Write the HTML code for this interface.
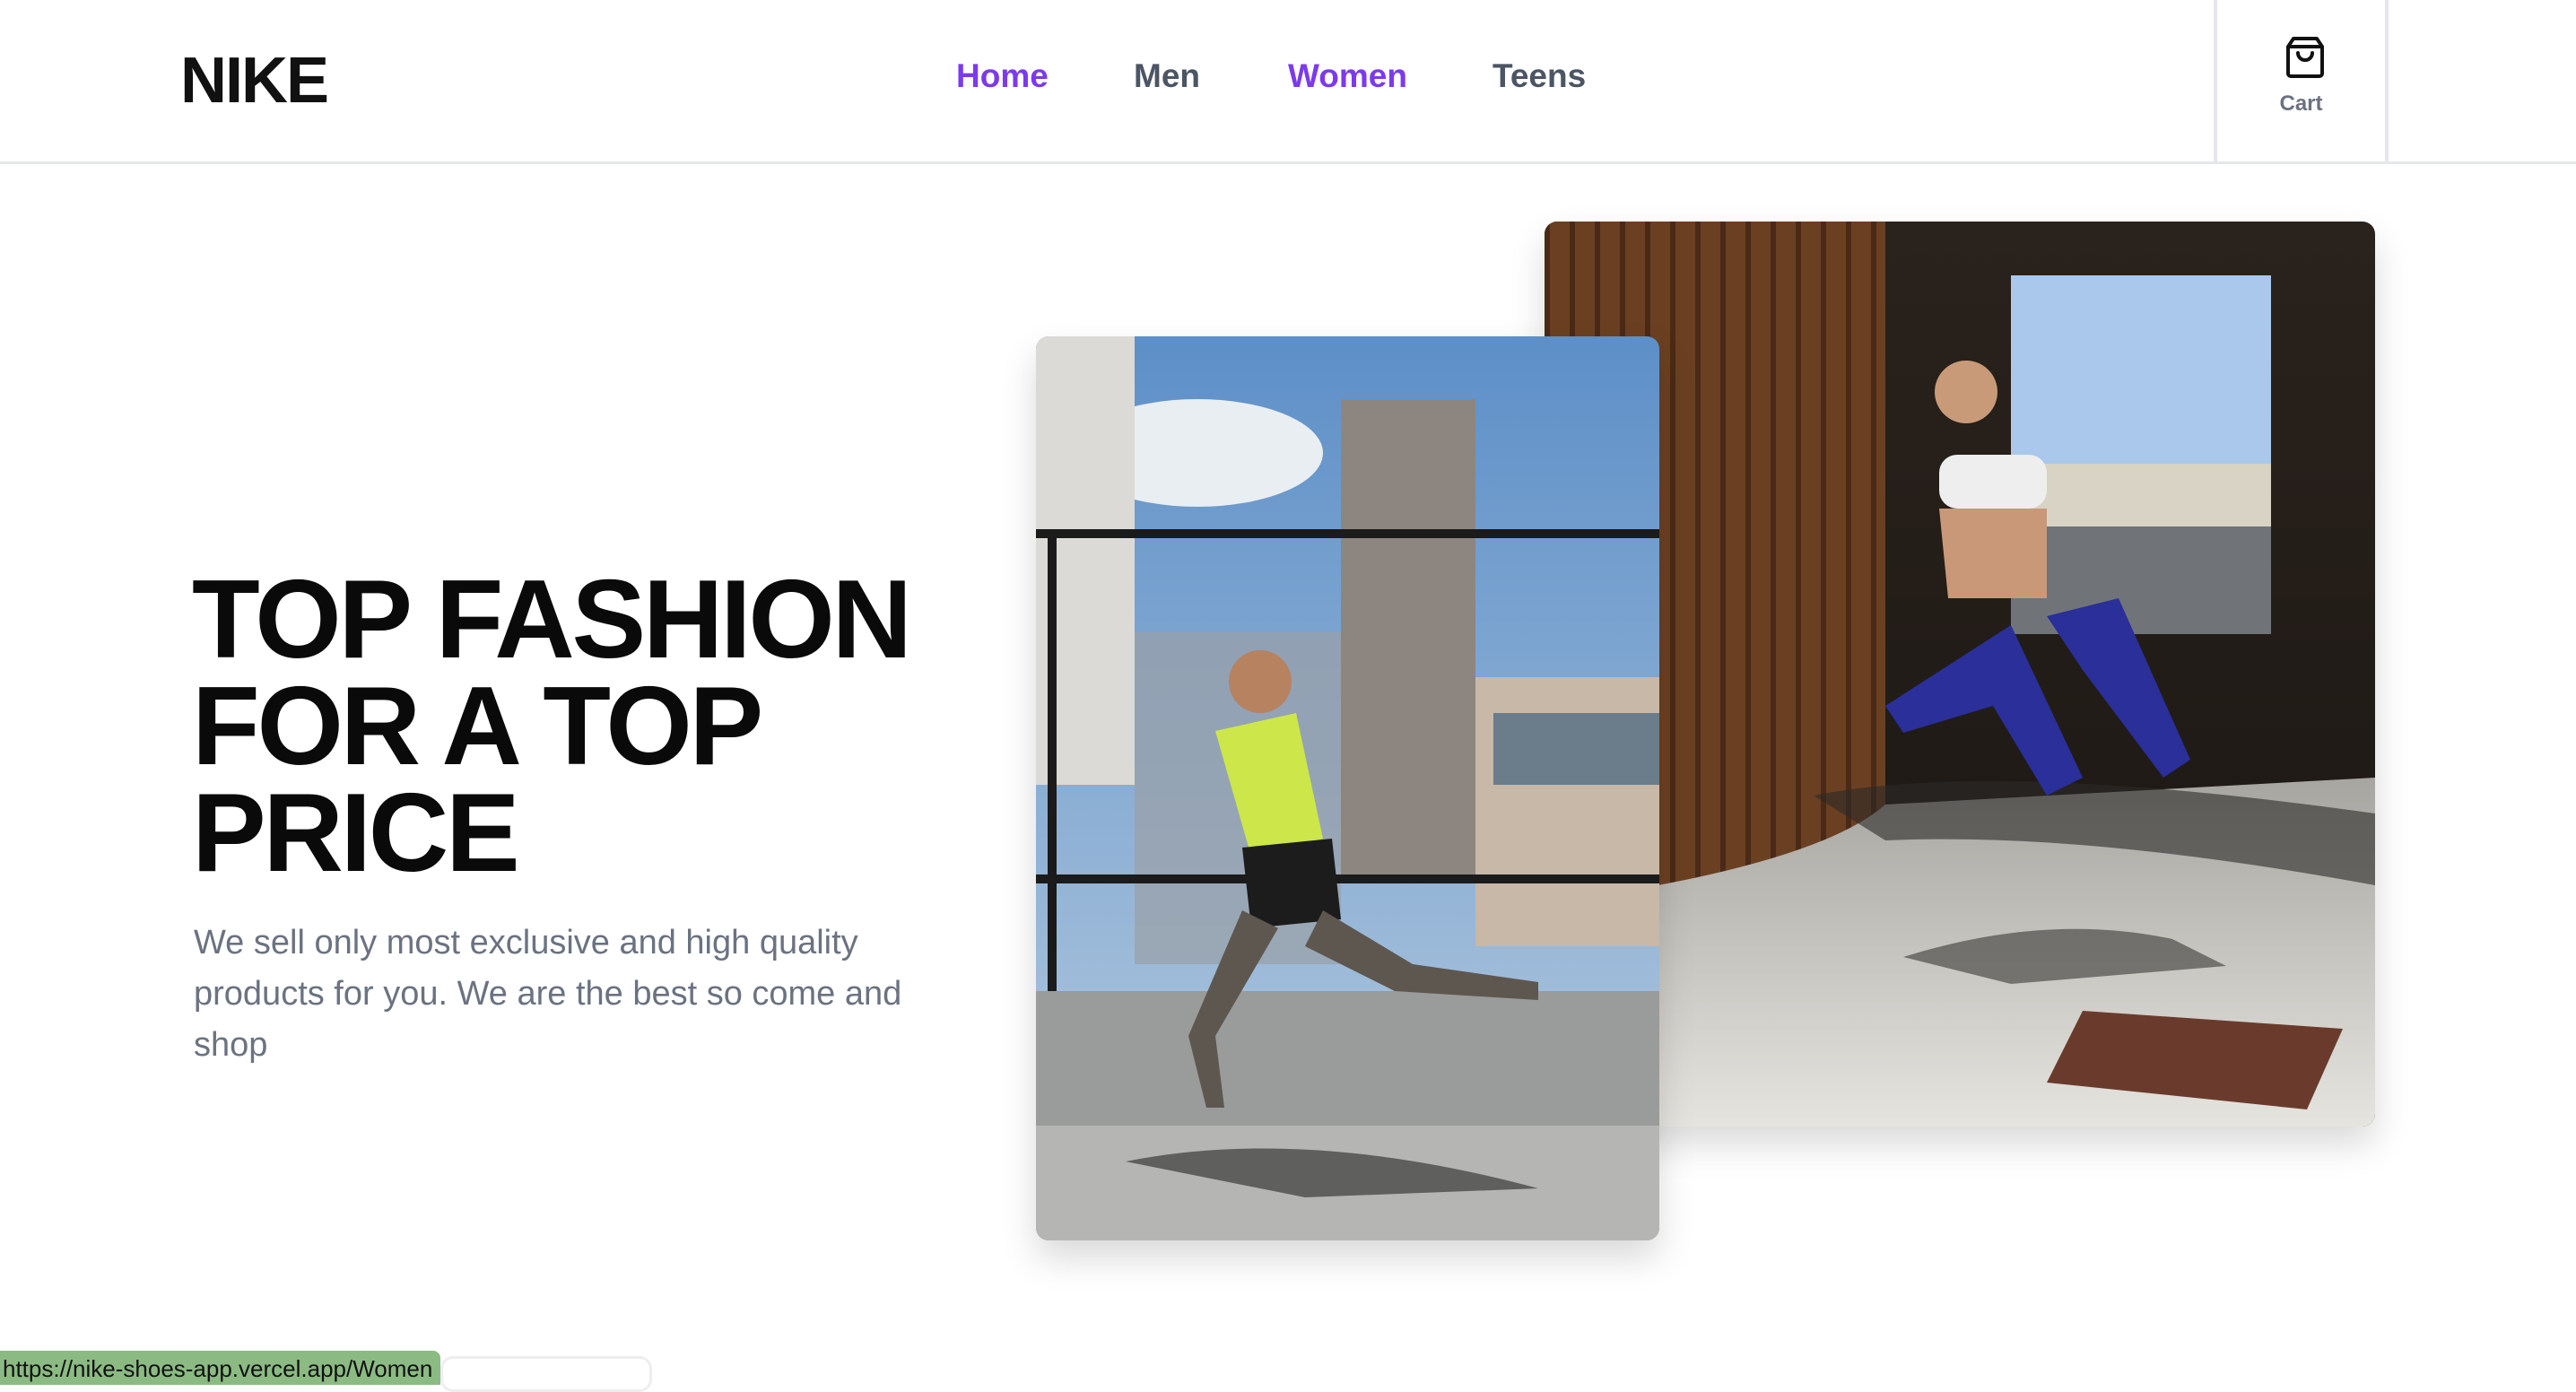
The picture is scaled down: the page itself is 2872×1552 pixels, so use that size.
<!DOCTYPE html>
<html><head><meta charset="utf-8"><style>
*{margin:0;padding:0;box-sizing:border-box}
body{width:2872px;height:1544px;background:#fff;font-family:"Liberation Sans",sans-serif;position:relative;overflow:hidden}
.hdr{position:absolute;left:0;top:0;width:2872px;height:183px;border-bottom:3px solid #e5e7eb}
.logo{position:absolute;left:201px;top:49px;font-size:72px;font-weight:bold;color:#111;letter-spacing:-2px}
.nav{position:absolute;top:64px;font-size:37px;font-weight:bold;color:#4b5563}
.p{color:#7c3aed}
.cart{position:absolute;left:2468px;top:0;width:195px;height:182px;border-left:4px solid #e5e7eb;border-right:4px solid #e5e7eb;text-align:center}
.cart span{position:absolute;left:0;right:0;top:102px;font-size:24px;font-weight:bold;color:#6b7280}
h1{position:absolute;left:214px;top:632px;font-size:124px;line-height:119px;font-weight:bold;color:#0a0a0a;letter-spacing:-3.3px;width:900px}
.desc{position:absolute;left:216px;top:1023px;width:840px;font-size:38px;line-height:57px;color:#6b7280}
.img{position:absolute;border-radius:14px;overflow:hidden;box-shadow:0 20px 40px rgba(0,0,0,.15)}
.status{position:absolute;left:0;top:1506px;width:491px;height:38px;background:#8bbb83;border-top-right-radius:8px;font-size:26px;color:#111;padding:5px 0 0 3px}
.card{position:absolute;left:491px;top:1512px;width:236px;height:40px;border:3px solid #eee;border-radius:14px}
</style></head><body>
<div class="hdr">
<div class="logo">NIKE</div>
<div class="nav p" style="left:1066px">Home</div>
<div class="nav" style="left:1264px">Men</div>
<div class="nav p" style="left:1436px">Women</div>
<div class="nav" style="left:1664px">Teens</div>
<div class="cart">
<svg style="position:absolute;left:75px;top:40px" width="46" height="48" viewBox="0 0 46 48"><path d="M10 3H36L42 12V42A3 3 0 0 1 39 45H7A3 3 0 0 1 4 42V12Z M4 12H42 M15 19A8 8 0 0 0 31 19" fill="none" stroke="#111" stroke-width="4" stroke-linejoin="round" stroke-linecap="round"/></svg>
<span>Cart</span></div>
</div>
<h1>TOP FASHION FOR A TOP PRICE</h1>
<div class="desc">We sell only most exclusive and high quality products for you. We are the best so come and shop</div>

<div class="img" style="left:1722px;top:247px;width:926px;height:1009px">
<svg width="926" height="1009" viewBox="0 0 926 1009">
<defs><linearGradient id="g1" x1="0" y1="0" x2="0" y2="1"><stop offset="0" stop-color="#2a221c"/><stop offset="1" stop-color="#1a1613"/></linearGradient>
<linearGradient id="gr" x1="0" y1="0" x2="0" y2="1"><stop offset="0" stop-color="#a7a5a0"/><stop offset="1" stop-color="#e6e4df"/></linearGradient>
<pattern id="st" width="28" height="10" patternUnits="userSpaceOnUse"><rect width="28" height="10" fill="#6b4022"/><rect width="6" height="10" fill="#4a2a16"/></pattern></defs>
<rect width="926" height="1009" fill="url(#g1)"/>
<rect width="380" height="800" fill="url(#st)"/>
<rect x="520" y="60" width="290" height="300" fill="#a9c8ec"/>
<rect x="520" y="270" width="290" height="130" fill="#d8d3c4"/>
<rect x="520" y="340" width="290" height="120" fill="#707478"/>
<path d="M0 760 Q300 720 380 650 L926 620 V1009 H0Z" fill="url(#gr)"/>
<path d="M300 640 Q500 600 926 660 V740 Q600 680 380 690Z" fill="#2c2a28" opacity=".6"/>
<path d="M600 880 L890 900 L850 990 L560 960Z" fill="#6a3b2c"/>
<path d="M380 540 L520 450 L600 620 L560 640 L500 540 L400 570Z" fill="#2a2f9a"/>
<path d="M560 440 L640 420 L720 600 L690 620 L600 500Z" fill="#2a2f9a"/>
<rect x="440" y="260" width="120" height="60" rx="20" fill="#eee"/>
<circle cx="470" cy="190" r="35" fill="#c89a78"/>
<path d="M440 320 L560 320 L560 420 L450 420Z" fill="#c99879"/>
<path d="M400 820 Q560 770 700 800 L760 830 L520 850Z" fill="#3a3836" opacity=".6"/>
</svg></div>

<div class="img" style="left:1155px;top:375px;width:695px;height:1008px">
<svg width="695" height="1008" viewBox="0 0 695 1008">
<defs><linearGradient id="s" x1="0" y1="0" x2="0" y2="1"><stop offset="0" stop-color="#5d8fc8"/><stop offset="1" stop-color="#b8cde0"/></linearGradient></defs>
<rect width="695" height="1008" fill="url(#s)"/>
<ellipse cx="180" cy="130" rx="140" ry="60" fill="#e9eef3"/>
<rect x="0" y="0" width="110" height="500" fill="#dcdad6"/>
<rect x="340" y="70" width="150" height="530" fill="#8d8680"/>
<rect x="490" y="380" width="205" height="300" fill="#c7b8a8"/>
<rect x="510" y="420" width="185" height="80" fill="#6b7c8a"/>
<rect x="110" y="330" width="230" height="370" fill="#9aa0a6" opacity=".7"/>
<g stroke="#1b1b1b" stroke-width="10"><line x1="0" y1="220" x2="695" y2="220"/><line x1="0" y1="605" x2="695" y2="605"/><line x1="18" y1="215" x2="18" y2="730"/></g>
<rect x="0" y="730" width="695" height="278" fill="#9a9b9b"/>
<rect x="0" y="880" width="695" height="128" fill="#b5b5b3"/>
<path d="M200 440 L290 420 L320 560 L240 580Z" fill="#cde64a"/>
<path d="M230 570 L330 560 L340 650 L240 660Z" fill="#1c1c1c"/>
<path d="M230 640 L170 780 L190 860 L210 860 L200 780 L270 660Z M320 640 L420 700 L560 720 L560 740 L400 730 L300 680Z" fill="#5e5750"/>
<circle cx="250" cy="385" r="35" fill="#b78260"/>
<path d="M100 920 Q300 880 560 950 L300 960Z" fill="#3a3a3a" opacity=".7"/>
</svg></div>

<div class="status">https://nike-shoes-app.vercel.app/Women</div>
<div class="card"></div>
</body></html>
